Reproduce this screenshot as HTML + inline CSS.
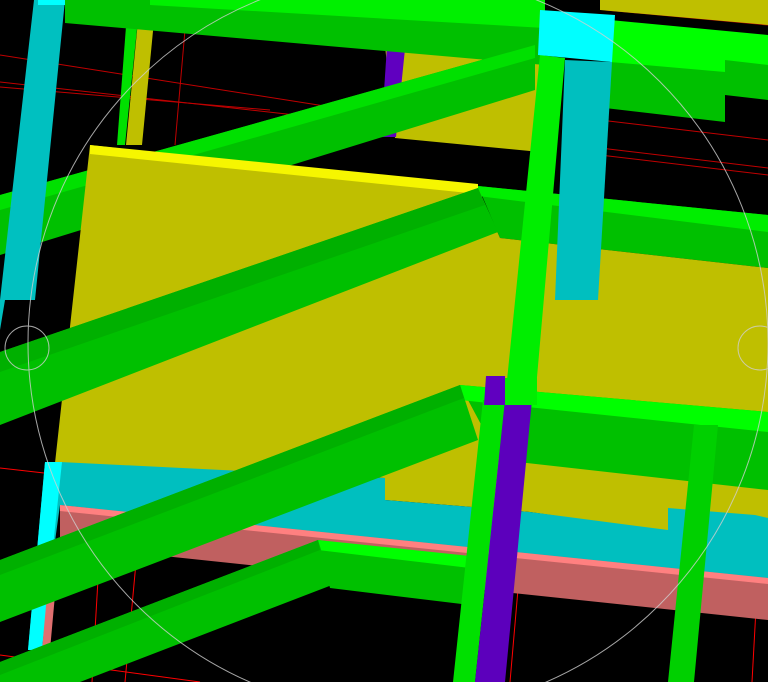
<!DOCTYPE html>
<html><head><meta charset="utf-8"><style>html,body{margin:0;padding:0;background:#000;overflow:hidden}svg{display:block}</style></head>
<body>
<svg width="768" height="682" viewBox="0 0 768 682" xmlns="http://www.w3.org/2000/svg">
<rect width="768" height="682" fill="#000"/>
<g stroke="#c00000" stroke-width="1" fill="none">
<line x1="0" y1="55" x2="350" y2="110"/>
<line x1="0" y1="82" x2="340" y2="120"/>
<line x1="0" y1="87" x2="270" y2="110"/>
<line x1="600" y1="120" x2="768" y2="140"/>
<line x1="600" y1="148" x2="768" y2="168"/>
<line x1="600" y1="155" x2="768" y2="175"/>
<line x1="185" y1="30" x2="175" y2="145"/>
<line x1="605" y1="10" x2="768" y2="25"/>
</g>
<g stroke="#ff0000" stroke-width="1" fill="none">
<line x1="0" y1="468" x2="768" y2="555"/>
<line x1="0" y1="655" x2="200" y2="682"/>
<line x1="105" y1="460" x2="92" y2="682"/>
<line x1="145" y1="465" x2="125" y2="682"/>
<line x1="525" y1="508" x2="510" y2="682"/>
<line x1="760" y1="535" x2="752" y2="682"/>
</g>
<polygon points="380,0 545,0 540,152 395,138" fill="#bfbf00"/>
<polygon points="600,0 768,0 768,25 600,10" fill="#bfbf00"/>
<polygon points="128,0 140,0 125,145 117,145" fill="#00e000"/>
<polygon points="140,0 156,0 142,145 126,145" fill="#bfbf00"/>
<polygon points="390,0 410,0 396,137 381,137" fill="#6000c0"/>
<polygon points="65,0 545,0 545,65 65,23" fill="#00c000"/>
<polygon points="150,0 545,0 545,28 150,5" fill="#00f000"/>
<polygon points="610,20 768,35 768,80 610,65" fill="#00ff00"/>
<polygon points="610,62 725,72 725,122 605,108" fill="#00c000"/>
<polygon points="725,60 768,65 768,100 725,95" fill="#00c000"/>
<polygon points="0,195 535,45 535,90 0,255" fill="#00c000"/>
<polygon points="0,195 535,45 535,58 0,210" fill="#00e000"/>
<polygon points="34,0 65,0 35,300 5,300 0,330 0,300" fill="#00c0c0"/>
<polygon points="38,0 65,0 65,5 38,5" fill="#00ffff"/>
<polygon points="478,186 768,215 768,268 500,238" fill="#00c000"/>
<polygon points="478,186 768,215 768,232 478,196" fill="#00ee00"/>
<polygon points="90,145 478,188 500,238 768,268 768,520 740,516 668,510 668,532 530,512 460,506 385,500 385,478 55,463" fill="#bfbf00"/>
<polygon points="90,145 478,184 478,194 90,154" fill="#f6f600"/>
<polygon points="45,462 60,462 385,478 385,500 460,506 530,512 668,530 668,508 755,515 768,518 768,582 60,505 40,650 28,650" fill="#00bfbf"/>
<polygon points="45,462 62,462 42,650 28,650" fill="#00ffff"/>
<polygon points="60,505 768,578 768,620 60,545" fill="#c06060"/>
<polygon points="52,540 60,540 50,650 42,650" fill="#e07070"/>
<polygon points="60,505 768,578 768,584 60,511" fill="#ff8080"/>
<polygon points="540,55 565,58 535,400 505,400" fill="#00ee00"/>
<polygon points="565,60 612,62 598,300 555,300" fill="#00bfbf"/>
<polygon points="540,10 615,15 612,62 538,55" fill="#00ffff"/>
<polygon points="0,352 478,188 498,232 0,425" fill="#00c000"/>
<polygon points="0,352 478,188 485,205 0,372" fill="#00b000"/>
<polygon points="460,385 768,412 768,490 500,460" fill="#00c000"/>
<polygon points="460,385 768,412 768,432 460,400" fill="#00ff00"/>
<polygon points="694,425 718,425 694,682 668,682" fill="#00d000"/>
<polygon points="0,560 460,385 478,440 0,622" fill="#00c000"/>
<polygon points="0,560 460,385 464,398 0,575" fill="#00b000"/>
<polygon points="318,540 470,560 470,605 330,588" fill="#00c000"/>
<polygon points="318,540 470,556 470,568 318,550" fill="#00ff00"/>
<polygon points="0,662 318,540 332,585 80,682 0,682" fill="#00c000"/>
<polygon points="0,662 318,540 320,550 0,675" fill="#00b000"/>
<polygon points="483,400 505,400 475,682 453,682" fill="#00e000"/>
<polygon points="505,400 532,400 505,682 475,682" fill="#5c00bc"/>
<polygon points="486,376 505,376 505,405 484,405" fill="#6000c0"/>
<polygon points="505,378 537,378 537,405 505,405" fill="#00ee00"/>
<g stroke="#d0d0d0" stroke-width="1" fill="none" opacity="0.8">
<circle cx="398" cy="343" r="370"/>
<circle cx="27" cy="348" r="22"/>
<circle cx="760" cy="348" r="22"/>
</g>
</svg>
</body></html>
